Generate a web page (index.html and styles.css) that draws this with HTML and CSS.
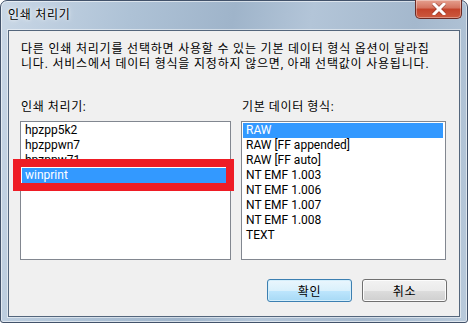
FILE: index.html
```html
<!DOCTYPE html>
<html lang="ko">
<head>
    <meta charset="UTF-8">
    <title>인쇄 처리기</title>
    <link rel="stylesheet" href="styles.css">
</head>
<body>
    <div class="window">
        <div class="titlebar">
            <span class="title">인쇄 처리기</span>
            <div class="close-btn">
                <svg width="14" height="12" viewBox="0 0 14 12">
                    <path d="M2 1 L12 11 M12 1 L2 11" stroke="#7a2a20" stroke-width="4.5" stroke-linecap="square" fill="none" opacity="0.5"/>
                    <path d="M2 1 L12 11 M12 1 L2 11" stroke="#fff" stroke-width="3" stroke-linecap="square" fill="none"/>
                </svg>
            </div>
        </div>

        <div class="client">
            <div class="desc">
                <div class="desc-line">다른 인쇄 처리기를 선택하면 사용할 수 있는 기본 데이터 형식 옵션이 달라집</div>
                <div class="desc-line">니다. 서비스에서 데이터 형식을 지정하지 않으면, 아래 선택값이 사용됩니다.</div>
            </div>

            <div class="lists">
                <div class="group">
                    <div class="label">인쇄 처리기:</div>
                    <div class="listbox left-list">
                        <div class="item">hpzpp5k2</div>
                        <div class="item">hpzppwn7</div>
                        <div class="item">hpzppw71</div>
                        <div class="item selected">winprint</div>
                        <div class="mark"></div>
                    </div>
                </div>
                <div class="group">
                    <div class="label">기본 데이터 형식:</div>
                    <div class="listbox">
                        <div class="item selected">RAW</div>
                        <div class="item">RAW [FF appended]</div>
                        <div class="item">RAW [FF auto]</div>
                        <div class="item">NT EMF 1.003</div>
                        <div class="item">NT EMF 1.006</div>
                        <div class="item">NT EMF 1.007</div>
                        <div class="item">NT EMF 1.008</div>
                        <div class="item">TEXT</div>
                    </div>
                </div>
            </div>

            <div class="buttons">
                <button class="btn default">확인</button>
                <button class="btn">취소</button>
            </div>
        </div>
    </div>
</body>
</html>
```

FILE: styles.css
```css
* {
    margin: 0;
    padding: 0;
    box-sizing: border-box;
}

body {
    width: 468px;
    height: 323px;
    overflow: hidden;
    font-family: Roboto, "Noto Sans CJK KR", sans-serif;
    font-size: 12px;
    color: #000;
}

.window {
    width: 468px;
    height: 323px;
    display: flex;
    flex-direction: column;
    padding: 0 7px 5px 7px;
    border: 1px solid #42526a;
    border-radius: 7px 7px 3px 3px;
    background: linear-gradient(100deg, #c9d7e6 0%, #aec2d6 25%, #9fb4ca 45%, #b3c5d8 60%, #a4b8cd 80%, #b9cadb 100%);
    box-shadow: inset 0 0 0 1px rgba(255, 255, 255, 0.55);
}

.titlebar {
    height: 29px;
    display: flex;
    justify-content: space-between;
    align-items: flex-start;
}

.title {
    margin-top: 6px;
    line-height: 16px;
    letter-spacing: 0.7px;
    text-shadow: 0 0 6px rgba(255, 255, 255, 0.9), 0 0 3px rgba(255, 255, 255, 0.9);
}

.close-btn {
    width: 47px;
    height: 19px;
    margin-right: -2px;
    margin-top: -1px;
    display: flex;
    align-items: center;
    justify-content: center;
    border: 1px solid #6b2b25;
    border-top: none;
    border-radius: 0 0 5px 5px;
    background: linear-gradient(#e5a08f 0%, #d4725e 45%, #c3422a 50%, #cc5a3f 100%);
    box-shadow: inset 0 0 0 1px rgba(255, 255, 255, 0.35);
}

.client {
    flex: 1;
    display: flex;
    flex-direction: column;
    background: #f0f0f0;
    border: 1px solid #54667c;
    box-shadow: 0 0 0 1px rgba(255, 255, 255, 0.5);
    padding: 11px 13px 0 11px;
}

.desc {
    padding-left: 1px;
    height: 45px;
    letter-spacing: 0.8px;
    white-space: nowrap;
}

.desc-line {
    height: 15px;
    line-height: 15px;
}

.lists {
    display: grid;
    grid-template-columns: 211px 205px;
    column-gap: 10px;
    margin-top: 13px;
}

.label {
    line-height: 15px;
    padding-left: 1px;
    margin-bottom: 6px;
    letter-spacing: 0.6px;
}

.listbox {
    position: relative;
    height: 139px;
    background: #fff;
    border: 1px solid #828790;
    padding: 1px 2px 1px 1px;
}

.item {
    height: 15px;
    line-height: 15px;
    padding-left: 3px;
    white-space: nowrap;
}

.item.selected {
    background: #3399ff;
    color: #fff;
}

.mark {
    position: absolute;
    left: -8px;
    top: 37px;
    width: 221px;
    height: 32px;
    border: 8px solid #ee1c25;
}

.buttons {
    display: flex;
    justify-content: flex-end;
    gap: 10px;
    margin-top: 19px;
    margin-right: -1px;
}

.btn {
    width: 85px;
    height: 23px;
    font-family: inherit;
    font-size: 12px;
    letter-spacing: 0.6px;
    color: #000;
    border: 1px solid #707070;
    border-radius: 3px;
    background: linear-gradient(#f2f2f2 0%, #ebebeb 50%, #dddddd 51%, #cfcfcf 100%);
    box-shadow: inset 0 0 0 1px #fcfcfc;
}

.btn.default {
    border-color: #3c7fb1;
    background: linear-gradient(#eaf6fd 0%, #d9f0fc 50%, #bee6fd 51%, #a7d9f5 100%);
    box-shadow: inset 0 0 0 1px #d4eefb;
}
```
